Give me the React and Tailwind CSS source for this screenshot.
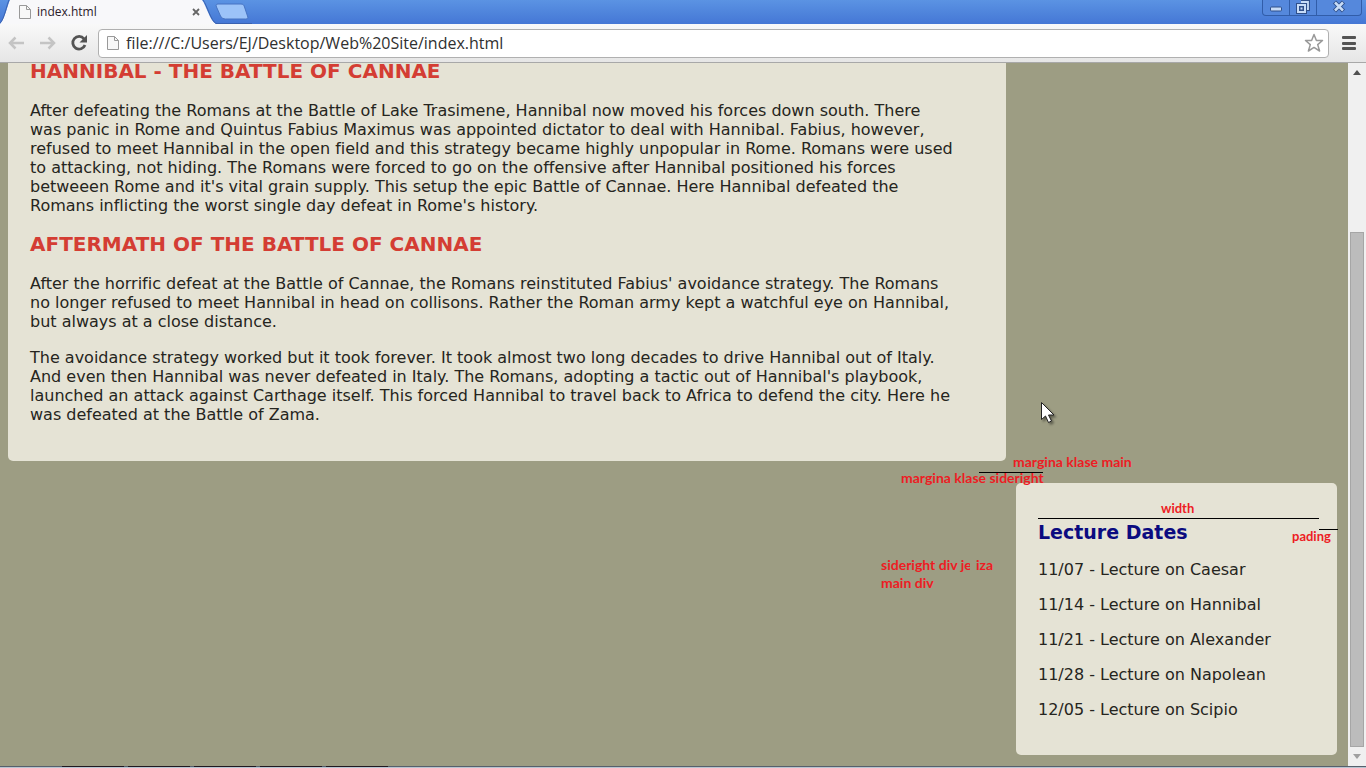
import React from "react";

const lectures = [
  "11/07 - Lecture on Caesar",
  "11/14 - Lecture on Hannibal",
  "11/21 - Lecture on Alexander",
  "11/28 - Lecture on Napolean",
  "12/05 - Lecture on Scipio",
];

function PageIcon({ className }) {
  return (
    <svg className={className} viewBox="0 0 14 16" fill="none" aria-hidden="true">
      <path d="M1.500 1.500h7l4 4v9h-11z" fill="#f8f8f8" stroke="#999" />
      <path d="M8.500 1.500v4h4" stroke="#999" />
    </svg>
  );
}

function TabStrip() {
  return (
    <header className="relative flex h-6 shrink-0 bg-linear-to-b from-[#5b93e3] to-[#4577d5]">
      <svg className="absolute top-0 left-0 h-6 w-[252px]" viewBox="0 0 252 24" aria-hidden="true">
        <path d="M0 24C4 21 8 4 10 0h192c4 5 8 21 14 24z" fill="#f8f8fa" />
        <path d="M0 23C4 20 7 4 9 0M203 0c4 5 8 21 13 23.500h36" fill="none" stroke="#3a62b0" />
        <path d="M218 4h23c2 0 3 1 3.500 3l3 9c1 2 0 3-2 3h-20c-2 0-4-1-5-3l-4-9c-1-2 0-3 1.500-3z" fill="#9cc3f8" stroke="#4673c2" />
      </svg>
      <div className="relative flex h-6 w-[204px] items-center pl-[18px]">
        <PageIcon className="h-4 w-[14px]" />
        <span className="ml-[5px] flex-1 font-['Open_Sans',sans-serif] text-[12px] leading-6 text-[#2b202b]">index.html</span>
        <button aria-label="Close tab" className="flex h-4 w-4 items-center justify-center">
          <svg className="h-2 w-2" viewBox="0 0 8 8" aria-hidden="true">
            <path d="M1 1l6 6M7 1L1 7" stroke="#666" strokeWidth="1.800" />
          </svg>
        </button>
      </div>
      <div className="relative mr-1 ml-auto flex h-4 w-[100px] overflow-hidden rounded-b border border-t-0 border-[#315da9] bg-[#5588dc]">
        <button aria-label="Minimize" className="flex w-[27px] items-center justify-center border-r border-[#315da9]">
          <svg className="h-4 w-4" viewBox="0 0 16 16" aria-hidden="true">
            <rect x="2.500" y="7" width="11" height="4" rx="1" fill="#c7dcf7" stroke="#2f4f8a" />
          </svg>
        </button>
        <button aria-label="Restore" className="flex w-[27px] items-center justify-center border-r border-[#315da9]">
          <svg className="h-4 w-4" viewBox="0 0 16 16" fill="none" aria-hidden="true">
            <path d="M6 2h7v7h-3" stroke="#2f4f8a" strokeWidth="4" />
            <path d="M6 2h7v7h-3" stroke="#c7dcf7" strokeWidth="1.800" />
            <rect x="3" y="5" width="7" height="7" fill="#5588dc" stroke="#2f4f8a" strokeWidth="4" />
            <rect x="3" y="5" width="7" height="7" fill="#2f4f8a" stroke="#c7dcf7" strokeWidth="2" />
            <rect x="5.500" y="7.500" width="2" height="2" fill="#c7dcf7" />
          </svg>
        </button>
        <button aria-label="Close" className="flex flex-1 items-center justify-center">
          <svg className="h-4 w-4" viewBox="0 0 16 16" aria-hidden="true">
            <path d="M3.500 2l9 9M12.500 2l-9 9" stroke="#2f4f8a" strokeWidth="4.500" />
            <path d="M4 2.500l8 8M12 2.500l-8 8" stroke="#c7dcf7" strokeWidth="2.500" />
          </svg>
        </button>
      </div>
    </header>
  );
}

function Toolbar() {
  return (
    <nav className="flex h-[39px] shrink-0 items-center border-b border-[#a8a8a8] bg-linear-to-b from-[#f9f9f9] to-[#e6e6e6] pr-[10px] pl-2">
      <button aria-label="Back" className="h-4 w-[17px]">
        <svg className="h-4 w-[17px]" viewBox="0 0 17 16" fill="none" aria-hidden="true">
          <path d="M16 8H2M7.500 2.500L2 8l5.500 5.500" stroke="#c4c4c4" strokeWidth="2.500" />
        </svg>
      </button>
      <button aria-label="Forward" className="ml-[14px] h-4 w-[17px]">
        <svg className="h-4 w-[17px]" viewBox="0 0 17 16" fill="none" aria-hidden="true">
          <path d="M1 8h14M9.500 2.500L15 8l-5.500 5.500" stroke="#c4c4c4" strokeWidth="2.500" />
        </svg>
      </button>
      <button aria-label="Reload" className="ml-[14px] h-[18px] w-[18px]">
        <svg className="h-[18px] w-[18px]" viewBox="0 0 18 18" fill="none" aria-hidden="true">
          <path d="M14 4.800A6.300 6.300 0 1 0 15 11" stroke="#545454" strokeWidth="2.800" />
          <path d="M17 1v7.500H9.500z" fill="#545454" />
        </svg>
      </button>
      <div className="ml-[10px] flex h-[29px] flex-1 items-center rounded-sm border border-[#b0b0b0] bg-white pr-1 pl-[7px]">
        <PageIcon className="h-[18px] w-[14px]" />
        <input
          aria-label="Address"
          defaultValue="file:///C:/Users/EJ/Desktop/Web%20Site/index.html"
          className="ml-[6px] min-w-0 flex-1 bg-transparent font-['Open_Sans',sans-serif] text-[16px] leading-6 text-[#303030] outline-none"
        />
        <button aria-label="Bookmark this page" className="h-5 w-5">
          <svg className="h-5 w-5" viewBox="0 0 20 20" fill="#fff" aria-hidden="true">
            <path d="M10 1.500l2.400 6h6.100l-4.800 4.100 1.900 6.400L10 14.400 4.400 18l1.900-6.400L1.500 7.500h6.100z" stroke="#999" strokeWidth="1.500" strokeLinejoin="round" />
          </svg>
        </button>
      </div>
      <button aria-label="Menu" className="ml-[13px] flex h-[14px] w-[14px] flex-col justify-between">
        <span className="h-[3px] w-full rounded-[1px] bg-[#545454]" />
        <span className="h-[3px] w-full rounded-[1px] bg-[#545454]" />
        <span className="h-[3px] w-full rounded-[1px] bg-[#545454]" />
      </button>
    </nav>
  );
}

function Scrollbar() {
  return (
    <div className="flex w-[18px] shrink-0 flex-col items-center bg-[#f0f0f0]" aria-hidden="true">
      <svg className="mt-[7px] h-[5px] w-2" viewBox="0 0 8 5">
        <path d="M4 0l4 5H0z" fill="#505050" />
      </svg>
      <div className="mt-[157px] mb-[7px] w-[14px] flex-1 border border-[#a6a6a6] bg-[#bcbcbc]" />
      <svg className="mb-[7px] h-[5px] w-2" viewBox="0 0 8 5">
        <path d="M0 0h8L4 5z" fill="#a0a0a0" />
      </svg>
    </div>
  );
}

function Heading({ children }) {
  return <h2 className="text-[20px] leading-[25px] font-bold text-[#d43d33]">{children}</h2>;
}

function Paragraph({ children }) {
  return <p className="mt-[17px] text-[16px] leading-[19px] whitespace-nowrap text-[#252520]">{children}</p>;
}

function Article() {
  return (
    <main className="-mt-1 mr-[342px] ml-2 rounded-b-[5px] bg-[#e5e3d5] px-[22px] pb-[37px]">
      <Heading>HANNIBAL - THE BATTLE OF CANNAE</Heading>
      <Paragraph>
        After defeating the Romans at the Battle of Lake Trasimene, Hannibal now moved his forces down south. There<br />
        was panic in Rome and Quintus Fabius Maximus was appointed dictator to deal with Hannibal. Fabius, however,<br />
        refused to meet Hannibal in the open field and this strategy became highly unpopular in Rome. Romans were used<br />
        to attacking, not hiding. The Romans were forced to go on the offensive after Hannibal positioned his forces<br />
        betweeen Rome and it's vital grain supply. This setup the epic Battle of Cannae. Here Hannibal defeated the<br />
        Romans inflicting the worst single day defeat in Rome's history.
      </Paragraph>
      <div className="mt-[17px]">
        <Heading>AFTERMATH OF THE BATTLE OF CANNAE</Heading>
      </div>
      <Paragraph>
        After the horrific defeat at the Battle of Cannae, the Romans reinstituted Fabius' avoidance strategy. The Romans<br />
        no longer refused to meet Hannibal in head on collisons. Rather the Roman army kept a watchful eye on Hannibal,<br />
        but always at a close distance.
      </Paragraph>
      <Paragraph>
        The avoidance strategy worked but it took forever. It took almost two long decades to drive Hannibal out of Italy.<br />
        And even then Hannibal was never defeated in Italy. The Romans, adopting a tactic out of Hannibal's playbook,<br />
        launched an attack against Carthage itself. This forced Hannibal to travel back to Africa to defend the city. Here he<br />
        was defeated at the Battle of Zama.
      </Paragraph>
    </main>
  );
}

function Lectures() {
  return (
    <aside className="mt-[22px] mr-[11px] w-[321px] self-end rounded-[5px] bg-[#e5e3d5] px-[22px] pt-[38px] pb-9">
      <h2 className="text-[19px] leading-[23px] font-bold text-[#0b0b80]">Lecture Dates</h2>
      <ul className="mt-4 flex flex-col gap-4 text-[16px] leading-[19px] text-[#252520]">
        {lectures.map((lecture) => (
          <li key={lecture}>{lecture}</li>
        ))}
      </ul>
    </aside>
  );
}

function Notes() {
  return (
    <div className="pointer-events-none font-[Lato,sans-serif] text-[14px] leading-[18px] font-bold whitespace-nowrap text-[#ed1c24]">
      <span className="absolute top-[390px] left-[1013px]">margina klase main</span>
      <span className="absolute top-[406px] left-[901px]">margina klase sideright</span>
      <span className="absolute top-[436px] left-[1161px] text-[13px]">width</span>
      <span className="absolute top-[464px] left-[1292px] text-[13px]">pading</span>
      <span className="absolute top-[493px] left-[881px]">sideright div je</span>
      <span className="absolute top-[493px] left-[970px] bg-[#9d9d83] pl-[6px]">iza</span>
      <span className="absolute top-[511px] left-[881px]">main div</span>
      <div className="absolute top-[409px] left-[979px] h-px w-16 bg-black" />
      <div className="absolute top-[455px] left-[1038px] h-px w-[281px] bg-black" />
      <div className="absolute top-[466px] left-[1319px] h-px w-[19px] bg-black" />
      <svg className="absolute top-[338px] left-[1040px] h-[25px] w-[17px] drop-shadow-[2px_2px_1px_rgba(0,0,0,0.4)]" viewBox="0 0 17 25" aria-hidden="true">
        <path d="M1.500 1.500v17l4-3.500 3 6.500 3-1.500-3-6h5.500z" fill="#fff" stroke="#222" />
      </svg>
    </div>
  );
}

export default function App() {
  return (
    <div className="flex h-screen flex-col overflow-hidden">
      <TabStrip />
      <Toolbar />
      <div className="relative flex min-h-0 flex-1 bg-[#9d9d83]">
        <div className="flex min-w-0 flex-1 flex-col overflow-hidden font-['DejaVu_Sans',sans-serif] [font-variant-ligatures:none]">
          <Article />
          <Lectures />
        </div>
        <Scrollbar />
        <Notes />
      </div>
      <footer className="flex h-[2px] shrink-0 border-t border-[#56606c] bg-[#b8c4d0]">
        <div className="ml-[62px] flex gap-1">
          <span className="-mt-px h-px w-[62px] bg-[#201820]" />
          <span className="-mt-px h-px w-[62px] bg-[#201820]" />
          <span className="-mt-px h-px w-[62px] bg-[#201820]" />
          <span className="-mt-px h-px w-[62px] bg-[#201820]" />
          <span className="-mt-px h-px w-[62px] bg-[#201820]" />
        </div>
      </footer>
    </div>
  );
}
